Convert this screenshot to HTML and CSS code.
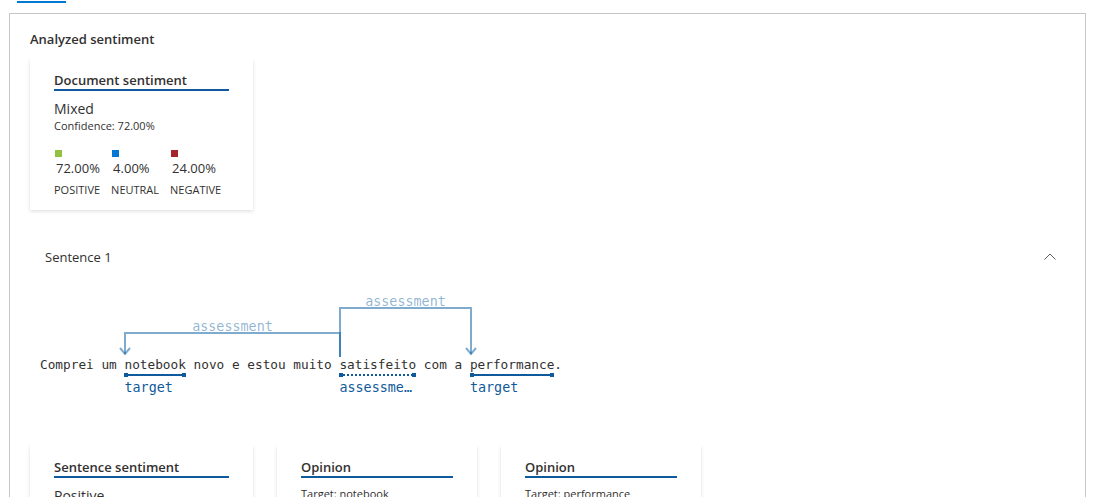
FILE: index.html
```html
<!DOCTYPE html>
<html lang="pt">
<head>
<meta charset="utf-8">
<title>Analyzed sentiment</title>
<link rel="stylesheet" href="styles.css">
</head>
<body>
<div class="tabs"><div class="tab-indicator"></div></div>
<section class="panel">
  <h2 class="panel-title">Analyzed sentiment</h2>
  <div class="card doc-card">
    <div class="card-title">Document sentiment</div>
    <div class="sent-value">Mixed</div>
    <div class="confidence">Confidence: 72.00%</div>
    <div class="scores">
      <div class="score">
        <span class="swatch pos"></span>
        <span class="pct">72.00%</span>
        <span class="lbl">POSITIVE</span>
      </div>
      <div class="score">
        <span class="swatch neu"></span>
        <span class="pct">4.00%</span>
        <span class="lbl">NEUTRAL</span>
      </div>
      <div class="score">
        <span class="swatch neg"></span>
        <span class="pct">24.00%</span>
        <span class="lbl">NEGATIVE</span>
      </div>
    </div>
  </div>

  <div class="sentence-row">
    <span class="sentence-name">Sentence 1</span>
    <svg class="chevron" width="12" height="7" viewBox="0 0 12 7" aria-hidden="true"><polyline points="0.5,6.5 6,1 11.5,6.5" fill="none" stroke="#605e5c" stroke-width="1"/></svg>
  </div>

  <div class="diagram">
    <svg class="links" width="480" height="110" viewBox="0 0 480 110">
      <g fill="none" stroke="rgba(0,90,158,0.5)" stroke-width="2">
        <polyline points="300,67 300,43 85,43 85,64"/>
        <polyline points="80,58 85,64 90,58"/>
        <polyline points="300,67 300,18 431,18 431,64"/>
        <polyline points="426,58 431,64 436,58"/>
      </g>
      <text class="link-label" x="192.5" y="41" text-anchor="middle">assessment</text>
      <text class="link-label" x="365.5" y="16" text-anchor="middle">assessment</text>
    </svg>
    <p class="sentence">Comprei um <span class="tok"><span class="mark"></span>notebook<span class="tag">target</span></span> novo e estou muito <span class="tok"><span class="mark dotted"></span>satisfeito<span class="tag">assessment</span></span> com a <span class="tok"><span class="mark"></span>performance<span class="tag">target</span></span>.</p>
  </div>

  <div class="detail-cards">
    <div class="card wide">
      <div class="card-title">Sentence sentiment</div>
      <div class="sent-value">Positive</div>
      <div class="confidence">Confidence: 100.00%</div>
    </div>
    <div class="card narrow">
      <div class="card-title">Opinion</div>
      <div class="target">Target: notebook</div>
      <div class="confidence">Positive</div>
    </div>
    <div class="card narrow">
      <div class="card-title">Opinion</div>
      <div class="target">Target: performance</div>
      <div class="confidence">Positive</div>
    </div>
  </div>
</section>
</body>
</html>
```
FILE: styles.css
```css
* { box-sizing: border-box; }
html, body { margin: 0; padding: 0; background: #ffffff; }
body {
  font-family: "Open Sans", "Noto Sans", sans-serif;
  color: #323130;
  overflow: hidden;
}
.tabs { height: 13px; padding-left: 17px; padding-top: 1px; }
.tab-indicator { width: 49px; height: 2px; background: #0078d4; }

.panel {
  margin-left: 9px;
  width: 1077px;
  min-height: 600px;
  border: 1px solid #c8c6c4;
  border-bottom: none;
  padding: 16px 20px 0 20px;
}
.panel-title {
  margin: 0;
  font-size: 13px;
  line-height: 18px;
  font-weight: 600;
}
.card {
  background: #fff;
  box-shadow: 0 1.6px 3.6px rgba(0,0,0,0.13), 0 0.3px 0.9px rgba(0,0,0,0.11);
  padding: 13px 24px 12px 24px;
}
.doc-card { width: 223px; margin-top: 10px; }
.card-title {
  font-size: 13px;
  line-height: 18px;
  font-weight: 600;
  border-bottom: 2px solid #0f5a9c;
}
.sent-value { margin-top: 8px; font-size: 14px; line-height: 19px; }
.confidence { font-size: 11px; line-height: 16px; }
.scores { display: flex; gap: 11px; margin-top: 16px; }
.score { display: flex; flex-direction: column; align-items: flex-start; }
.swatch { width: 7px; height: 7px; margin-left: 1px; }
.swatch.pos { background: #92c13f; }
.swatch.neu { background: #0078d4; }
.swatch.neg { background: #a4262c; }
.pct { font-size: 13px; line-height: 18px; margin-top: 2px; margin-left: 2px; }
.lbl { font-size: 11px; line-height: 16px; margin-top: 5px; }

.sentence-row {
  margin-top: 38px;
  display: flex;
  align-items: center;
  justify-content: space-between;
  padding: 0 9px 0 15px;
  height: 18px;
}
.sentence-name { font-size: 13px; line-height: 18px; }
.chevron { display: block; margin-top: -2px; }

.diagram {
  position: relative;
  margin-top: 24px;
  margin-left: 10px;
  height: 110px;
  padding-top: 67px;
}
.links { position: absolute; left: 0; top: 0; overflow: visible; }
.link-label {
  font-family: "DejaVu Sans Mono", "Liberation Mono", monospace;
  font-size: 13.4px;
  fill: rgba(0,90,158,0.45);
}
.sentence {
  margin: 0;
  font-family: "DejaVu Sans Mono", "Liberation Mono", monospace;
  font-size: 12.75px;
  line-height: 16px;
  white-space: pre;
  color: #323130;
}
.tok { position: relative; display: inline-block; }
.mark {
  position: absolute;
  left: 0; right: 0;
  top: calc(100% + 1px);
  height: 2px;
  background: #0f5a9c;
}
.mark::before, .mark::after {
  content: "";
  position: absolute;
  top: -1px;
  width: 4px; height: 4px;
  background: #0f5a9c;
}
.mark::before { left: 0; }
.mark::after { right: 0; }
.mark.dotted {
  background: repeating-linear-gradient(to right, #0f5a9c 0 2px, transparent 2px 4px);
}
.tag {
  position: absolute;
  left: 0;
  top: calc(100% + 6px);
  width: 100%;
  font-size: 13.4px;
  line-height: 18px;
  color: #0f5a9c;
  white-space: nowrap;
  overflow: hidden;
  text-overflow: ellipsis;
}

.detail-cards { display: flex; gap: 24px; margin-top: 45px; }
.card.wide { width: 223px; }
.card.narrow { width: 200px; }
.target { margin-top: 8px; font-size: 11px; line-height: 16px; }
```
